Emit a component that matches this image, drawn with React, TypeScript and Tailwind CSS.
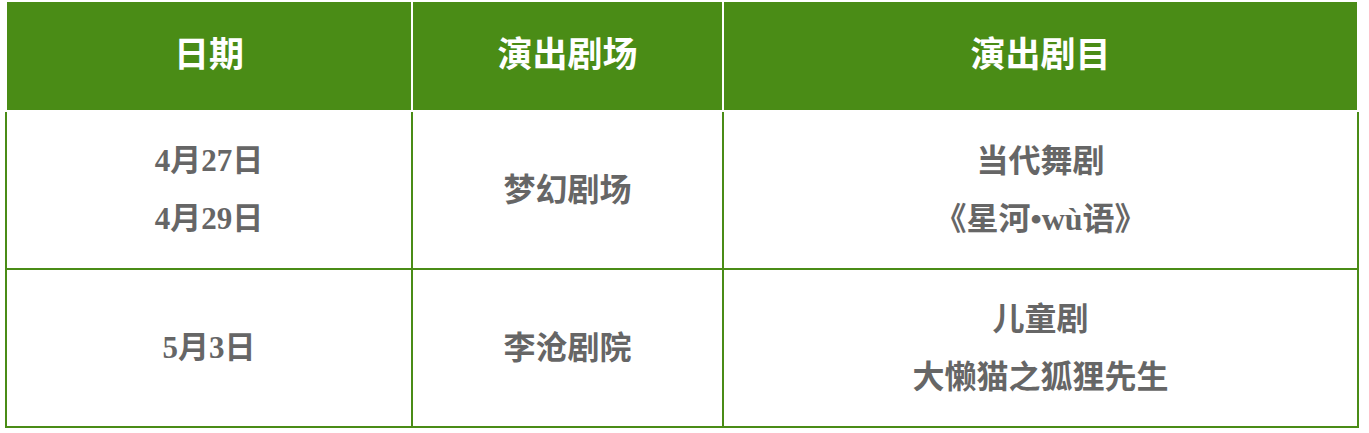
const rows = [
  { dates: ["4月27日", "4月29日"], venue: "梦幻剧场", show: ["当代舞剧", "《星河•wù语》"] },
  { dates: ["5月3日"], venue: "李沧剧院", show: ["儿童剧", "大懒猫之狐狸先生"] },
];

export default function App() {
  return (
    <div className="bg-white min-h-screen pl-[5px] pt-0">
      <table
        className="table-fixed border-collapse w-[1354px] font-bold"
        style={{ fontFamily: '"Liberation Serif", "Noto Sans CJK SC", serif' }}
      >
        <colgroup>
          <col className="w-[406px]" />
          <col className="w-[311px]" />
          <col />
        </colgroup>
        <thead>
          <tr className="h-[110px]">
            {["日期", "演出剧场", "演出剧目"].map((h) => (
              <th
                key={h}
                className="border-2 border-white bg-[#4a8c16] text-white text-[35px] text-center align-middle font-bold"
              >
                {h}
              </th>
            ))}
          </tr>
        </thead>
        <tbody>
          {rows.map((r, i) => (
            <tr key={i}>
              <td className="border-2 border-[#4a8c16] text-[#666666] text-[31px] leading-[58px] text-center align-middle py-5">
                {r.dates.map((d) => (
                  <div key={d}>{d}</div>
                ))}
              </td>
              <td className="border-2 border-[#4a8c16] text-[#666666] text-[32px] leading-[58px] text-center align-middle">
                {r.venue}
              </td>
              <td className="border-2 border-[#4a8c16] text-[#666666] text-[32px] leading-[58px] text-center align-middle py-5">
                {r.show.map((s) => (
                  <div key={s}>{s}</div>
                ))}
              </td>
            </tr>
          ))}
        </tbody>
      </table>
    </div>
  );
}
